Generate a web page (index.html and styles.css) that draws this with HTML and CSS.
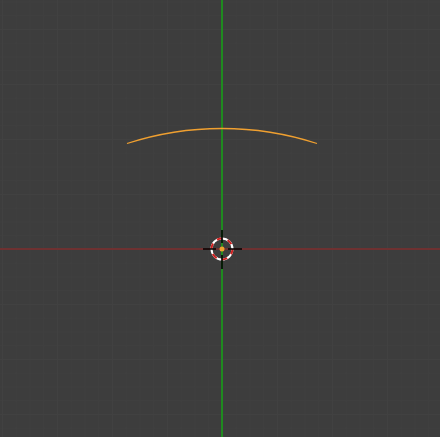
FILE: index.html
```html
<!DOCTYPE html>
<html>
<head>
<meta charset="utf-8">
<link rel="stylesheet" href="styles.css">
</head>
<body>
<div class="viewport">
  <svg class="scene" width="440" height="437" viewBox="0 0 440 437" shape-rendering="crispEdges">
    <defs>
      <pattern id="minor" x="222" y="249" width="13.75" height="13.75" patternUnits="userSpaceOnUse">
        <path d="M0 0.5H13.75M0.5 0V13.75" stroke="#3f3f3f" stroke-width="1" fill="none"/>
      </pattern>
      <pattern id="major" x="222" y="249" width="55" height="55" patternUnits="userSpaceOnUse">
        <path d="M0 0.5H55M0.5 0V55" stroke="#414141" stroke-width="1" fill="none"/>
      </pattern>
    </defs>
    <rect width="440" height="437" fill="url(#minor)"/>
    <rect width="440" height="437" fill="url(#major)"/>
    <rect x="0" y="248" width="440" height="2" fill="#6e3131"/>
    <rect x="221" y="0" width="2" height="437" fill="#1f8a1f"/>
    <g shape-rendering="geometricPrecision">
      <path d="M127 143.5 A308 308 0 0 1 317 143.5" stroke="#f0a030" stroke-width="1.3" fill="none"/>
      <circle cx="222" cy="249" r="10.5" stroke="#ffffff" stroke-width="2" fill="none"/>
      <circle cx="222" cy="249" r="10.5" stroke="#d02020" stroke-width="2" fill="none" stroke-dasharray="5.5 5.5"/>
      <path d="M203 249H216M228 249H242M222 230V243M222 255V269" stroke="#000000" stroke-width="1.6"/>
      <circle cx="222" cy="249" r="2.5" fill="#f0a030"/>
    </g>
  </svg>
</div>
</body>
</html>
```
FILE: styles.css
```css
html, body {
  margin: 0;
  padding: 0;
  background: #3d3d3d;
  font-family: "Liberation Sans", sans-serif;
}
.viewport {
  width: 440px;
  height: 437px;
  overflow: hidden;
  background: #3d3d3d;
}
.scene {
  display: block;
}
```
